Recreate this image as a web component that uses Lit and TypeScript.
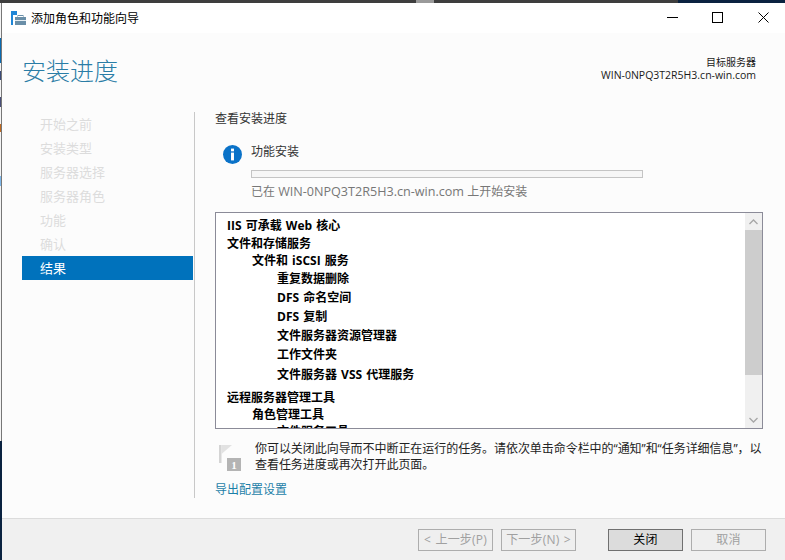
import { LitElement, html, css, unsafeCSS } from "lit";
import { customElement } from "lit/decorators.js";

const FONT = unsafeCSS(`"Open Sans", "Noto Sans CJK SC", sans-serif`);

const steps = ["开始之前", "安装类型", "服务器选择", "服务器角色", "功能", "确认", "结果"];

const rows: { t: string; lvl: number; g: number }[] = [
  { t: "IIS 可承载 Web 核心", lvl: 0, g: 0 },
  { t: "文件和存储服务", lvl: 0, g: 1 },
  { t: "文件和 iSCSI 服务", lvl: 1, g: 0 },
  { t: "重复数据删除", lvl: 2, g: 1 },
  { t: "DFS 命名空间", lvl: 2, g: 2 },
  { t: "DFS 复制", lvl: 2, g: 2 },
  { t: "文件服务器资源管理器", lvl: 2, g: 2 },
  { t: "工作文件夹", lvl: 2, g: 2 },
  { t: "文件服务器 VSS 代理服务", lvl: 2, g: 3 },
  { t: "远程服务器管理工具", lvl: 0, g: 6 },
  { t: "角色管理工具", lvl: 1, g: 0 },
  { t: "文件服务工具", lvl: 2, g: 0 },
];

const strip: { h: number; c: string }[] = [
  { h: 35, c: "#f4f4f4" },
  { h: 25, c: "#0a6ab0" },
  { h: 8, c: "#f4f4f4" },
  { h: 9, c: "#3a4a78" },
  { h: 17, c: "#f4f4f4" },
  { h: 10, c: "#4a4f78" },
  { h: 17, c: "#f4f4f4" },
  { h: 8, c: "#c06a20" },
  { h: 44, c: "#f4f4f4" },
  { h: 10, c: "#7fb8ea" },
  { h: 255, c: "#f4f4f4" },
];

@customElement("app-root")
export class AppRoot extends LitElement {
  static styles = css`
    :host { display: flex; flex-direction: column; width: 785px; height: 560px; overflow: hidden; background: #fcfcfc; font-family: ${FONT}; }
    .top { height: 3px; flex: none; display: flex; background: #3e3e3e; }
    .top .lite { margin-left: 416px; width: 18px; background: #9a9a9a; }
    .top .navy { margin-left: auto; width: 107px; background: #0a2240; }
    .desk { flex: 1; min-height: 0; display: flex; }
    .edge { width: 2px; flex: none; display: flex; flex-direction: column; background: #0a2240; }
    .edge-part { flex: none; border-right: 1px solid #777; }
    .win { flex: 1; min-width: 0; display: flex; flex-direction: column; background: #fcfcfc; }
    .title { height: 30px; box-sizing: border-box; padding: 0 0 1px 9px; flex: none; background: #fff; display: flex; align-items: center; font-size: 12px; color: #000; }
    .logo { margin-right: 5px; flex: none; }
    .spacer { flex: 1; }
    .ctl { width: 45px; height: 30px; display: flex; align-items: center; justify-content: center; flex: none; }
    .ctl.close { margin: 0 -1px 0 1px; }
    .body { flex: 1; display: flex; flex-direction: column; min-height: 0; padding-left: 20px; }
    .head { height: 79px; flex: none; display: flex; justify-content: space-between; }
    h1 { margin: 20px 0 0; font-size: 24px; font-weight: 300; line-height: 36px; color: #2a7da6; }
    .target { margin: 23px 29px 0 0; text-align: right; font-size: 10px; line-height: 13px; color: #1a1a1a; }
    .target .srv { font-size: 10.5px; }
    .main { flex: 1; display: flex; min-height: 0; }
    nav { width: 171px; margin-right: 1px; flex: none; }
    .step { height: 24px; line-height: 24px; padding-left: 18px; font-size: 13px; color: #dcdcdc; }
    .step.on { background: #0072bc; color: #fff; }
    .col { margin-bottom: 20px; flex: 1; border-left: 1px solid #c8c8c8; padding: 0 22px 0 20px; display: flex; flex-direction: column; min-width: 0; }
    .sub { font-size: 12px; line-height: 16px; color: #333; margin-top: -1px; }
    .status { display: flex; margin: 17px 0 0 8px; }
    .info { flex: none; width: 19px; height: 19px; margin: 1px 9px 0 0; }
    .status-r { flex: 1; }
    .status-t { font-size: 12px; line-height: 16px; color: #333; }
    .bar { margin-top: 10px; width: 390px; height: 6px; border: 1px solid #c4c4c4; background: #f6f6f6; }
    .note { font-size: 12px; line-height: 16px; color: #777; margin-top: 6px; white-space: nowrap; }
    .note .lat { font-size: 12.6px; }
    .list { margin-top: 12px; height: 215px; flex: none; border: 1px solid #8b8b98; background: #fff; display: flex; overflow: hidden; }
    .items { flex: 1; padding-top: 4px; overflow: hidden; }
    .row { height: 17px; line-height: 17px; font-size: 12px; font-weight: 700; color: #000; white-space: nowrap; word-spacing: 1px; }
    .l0 { padding-left: 11px; }
    .l1 { padding-left: 36px; }
    .l2 { padding-left: 61px; }
    .sb { width: 17px; flex: none; background: #f0f0f0; display: flex; flex-direction: column; }
    .arrow { height: 17px; flex: none; display: flex; align-items: center; justify-content: center; }
    .thumb { height: 145px; flex: none; background: #cdcdcd; }
    .track { flex: 1; }
    .hint { display: flex; margin-top: 12px; height: 31px; }
    .flag { flex: none; margin: 4px 14px 0 4px; }
    .num { font-family: "Liberation Serif", serif; font-size: 11px; font-weight: 700; fill: #fff; }
    .hint p { flex: none; margin: 0; font-size: 12px; line-height: 16px; color: #222; width: 516px; letter-spacing: -0.05px; }
    .link { margin-top: 10px; font-size: 12px; line-height: 16px; color: #1c7fa8; }
    footer { flex: none; height: 31px; margin-left: -20px; background: #f0f0f0; border-top: 1px solid #dcdcdc; display: flex; align-items: flex-start; padding: 10px 19px 0 0; justify-content: flex-end; }
    .btn { width: 73px; height: 20px; border: 1px solid #adadad; background: #efefef; font-size: 12px; line-height: 20px; text-align: center; color: #a0a0a0; white-space: nowrap; word-spacing: 1px; letter-spacing: 0.2px; }
    .btn + .btn { margin-left: 8px; }
    .btn.def { margin-left: 32px; background: #dcdcdc; border-color: #707070; color: #000; }
  `;

  render() {
    return html`
      <div class="top"><span class="lite"></span><span class="navy"></span></div>
      <div class="desk">
        <div class="edge">
          ${strip.map((s) => html`<div class="edge-part" style="height:${s.h}px;background:${s.c}"></div>`)}
        </div>
        <div class="win">
          <div class="title">
            <svg class="logo" width="15" height="14" viewBox="0 0 15 14">
              <rect x="0" y="0" width="6" height="4" fill="#1f86d6"/>
              <rect x="0" y="4" width="2" height="10" fill="#1f86d6"/>
              <rect x="4" y="6" width="11" height="8" fill="#6a8fa8"/>
              <rect x="7" y="4.5" width="5" height="2" fill="none" stroke="#6a8fa8"/>
              <rect x="4" y="9" width="11" height="1" fill="#e6eef3"/>
            </svg>
            <span>添加角色和功能向导</span>
            <span class="spacer"></span>
            <div class="ctl"><svg width="11" height="11" viewBox="0 0 11 11"><path d="M0 5.5H11" stroke="#000" fill="none"/></svg></div>
            <div class="ctl"><svg width="11" height="11" viewBox="0 0 11 11"><rect x="0.5" y="0.5" width="10" height="10" stroke="#000" fill="none"/></svg></div>
            <div class="ctl close"><svg width="11" height="11" viewBox="0 0 11 11"><path d="M0.5 0.5L10.5 10.5M10.5 0.5L0.5 10.5" stroke="#000" fill="none"/></svg></div>
          </div>
          <div class="body">
            <div class="head">
              <h1>安装进度</h1>
              <div class="target">目标服务器<br /><span class="srv">WIN-0NPQ3T2R5H3.cn-win.com</span></div>
            </div>
            <div class="main">
              <nav>
                ${steps.map((s, i) => html`<div class="step ${i === 6 ? "on" : ""}">${s}</div>`)}
              </nav>
              <div class="col">
                <div class="sub">查看安装进度</div>
                <div class="status">
                  <svg class="info" viewBox="0 0 18 18">
                    <circle cx="9" cy="9" r="9" fill="#0a72c8"/>
                    <rect x="7.6" y="3.4" width="2.8" height="2.6" fill="#fff"/>
                    <rect x="7.6" y="7.2" width="2.8" height="7.4" fill="#fff"/>
                  </svg>
                  <div class="status-r">
                    <div class="status-t">功能安装</div>
                    <div class="bar"></div>
                    <div class="note">已在 <span class="lat">WIN-0NPQ3T2R5H3.cn-win.com</span> 上开始安装</div>
                  </div>
                </div>
                <div class="list">
                  <div class="items">
                    ${rows.map((r) => html`<div class="row l${r.lvl}" style="margin-top:${r.g}px">${r.t}</div>`)}
                  </div>
                  <div class="sb">
                    <div class="arrow"><svg width="9" height="6" viewBox="0 0 9 6"><path d="M0.5 5L4.5 1L8.5 5" fill="none" stroke="#a6a6a6" stroke-width="1.3"/></svg></div>
                    <div class="thumb"></div>
                    <div class="track"></div>
                    <div class="arrow"><svg width="9" height="6" viewBox="0 0 9 6"><path d="M0.5 1L4.5 5L8.5 1" fill="none" stroke="#a6a6a6" stroke-width="1.3"/></svg></div>
                  </div>
                </div>
                <div class="hint">
                  <svg class="flag" width="22" height="26" viewBox="0 0 22 26">
                    <path d="M0 0H2.5V18H0Z" fill="#d4d4d4"/>
                    <path d="M2.5 0L13 0L2.5 9Z" fill="#e2e2e2"/>
                    <rect x="8" y="13" width="14" height="13" fill="#b4b4b4"/>
                    <text class="num" x="15" y="23.5" text-anchor="middle">1</text>
                  </svg>
                  <p>你可以关闭此向导而不中断正在运行的任务。请依次单击命令栏中的“通知”和“任务详细信息”，以查看任务进度或再次打开此页面。</p>
                </div>
                <div class="link">导出配置设置</div>
              </div>
            </div>
            <footer>
              <div class="btn">&lt; 上一步(P)</div>
              <div class="btn">下一步(N) &gt;</div>
              <div class="btn def">关闭</div>
              <div class="btn">取消</div>
            </footer>
          </div>
        </div>
      </div>
    `;
  }
}
